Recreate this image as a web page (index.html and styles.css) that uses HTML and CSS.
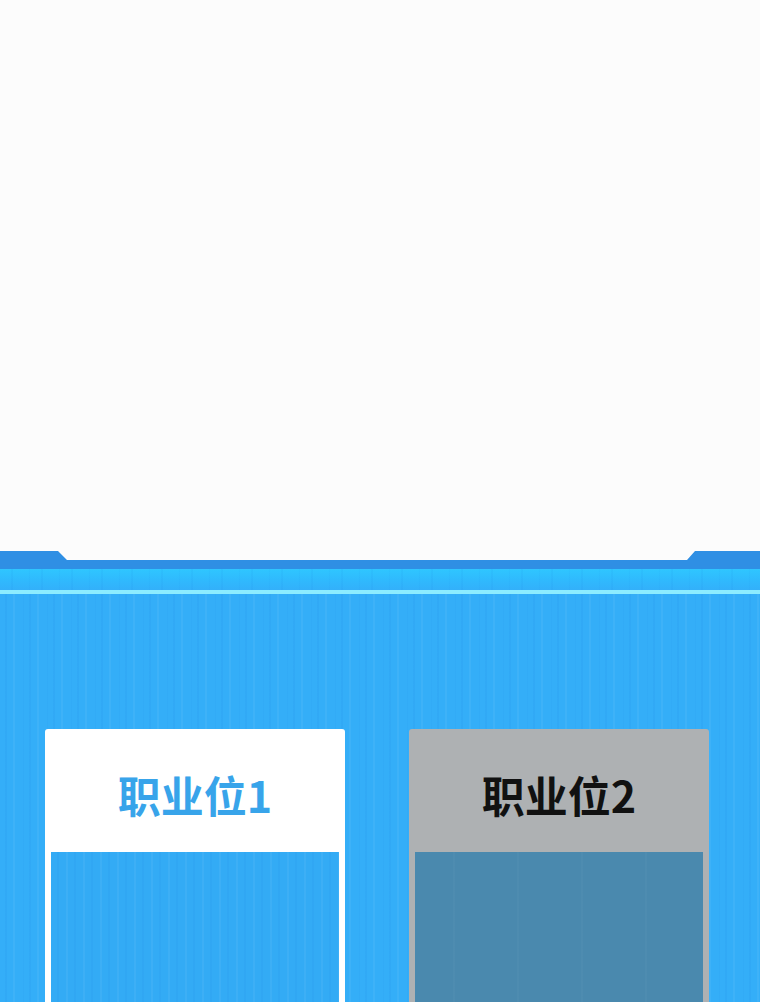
FILE: index.html
```html
<!DOCTYPE html>
<html lang="zh-CN">
<head>
  <meta charset="UTF-8">
  <title>职业位</title>
  <meta name="viewport" content="width=device-width, initial-scale=1.0">
  <link rel="stylesheet" href="styles.css">
</head>
<body>

<div class="blank"></div>

<section class="panel">
  <div class="panel-top"></div>
  <div class="panel-glow"></div>
  <div class="panel-line"></div>

  <div class="slots">
    <div class="slot active">
      <div class="slot-title">职业位1</div>
      <div class="slot-body"></div>
    </div>
    <div class="slot locked">
      <div class="slot-title">职业位2</div>
      <div class="slot-body"></div>
    </div>
  </div>
</section>

</body>
</html>
```

FILE: styles.css
```css
body {
  margin: 0;
  height: 1002px;
  overflow: hidden;
  background-color: #fcfcfc;
  font-family: "Noto Sans CJK SC", "Noto Sans", sans-serif;
}
.blank {
  height: 551px;
}
.panel {
  height: 451px;
  display: flex;
  flex-direction: column;
}
/* notched top edge with raised tabs on both ends */
.panel-top {
  height: 18px;
  background-color: #2f8fe4;
  clip-path: polygon(0 0, 58px 0, 67px 9px, 687px 9px, 695px 0, 100% 0, 100% 100%, 0 100%);
}
.panel-glow {
  height: 21px;
  background:
    repeating-linear-gradient(90deg, rgba(255,255,255,0) 0 11px, rgba(20,120,220,0.07) 11px 13px, rgba(255,255,255,0) 13px 29px, rgba(20,120,220,0.05) 29px 30px),
    linear-gradient(#2fc6ff, #30b8fd 60%, #33b0fa);
}
.panel-line {
  height: 4px;
  background-color: #8cecff;
}
.slots {
  flex: 1;
  display: flex;
  gap: 64px;
  padding: 135px 0 0 45px;
  background:
    repeating-linear-gradient(90deg, rgba(255,255,255,0) 0 5px, rgba(20,120,220,0.09) 5px 7px, rgba(255,255,255,0) 7px 13px, rgba(255,255,255,0.05) 13px 15px, rgba(255,255,255,0) 15px 23px, rgba(20,120,220,0.06) 23px 24px),
    #34aef8;
}
.slot {
  width: 300px;
  border-radius: 3px 3px 0 0;
  display: flex;
  flex-direction: column;
}
.slot-title {
  height: 123px;
  display: flex;
  align-items: center;
  justify-content: center;
  padding-top: 6px;
  box-sizing: border-box;
  font-size: 43px;
  font-weight: 700;
}
.slot-body {
  flex: 1;
  margin: 0 6px;
}
.active {
  background-color: #ffffff;
}
.active .slot-title {
  color: #38a4ea;
}
.active .slot-body {
  background:
    repeating-linear-gradient(90deg, rgba(255,255,255,0) 0 6px, rgba(20,120,220,0.08) 6px 8px, rgba(255,255,255,0) 8px 15px, rgba(255,255,255,0.05) 15px 17px),
    #33abf5;
}
.locked {
  background-color: #aeb1b3;
}
.locked .slot-title {
  color: #111111;
}
.locked .slot-body {
  background:
    repeating-linear-gradient(90deg, rgba(255,255,255,0) 0 38px, rgba(255,255,255,0.025) 38px 40px, rgba(255,255,255,0) 40px 64px),
    #4a89ae;
}
```
